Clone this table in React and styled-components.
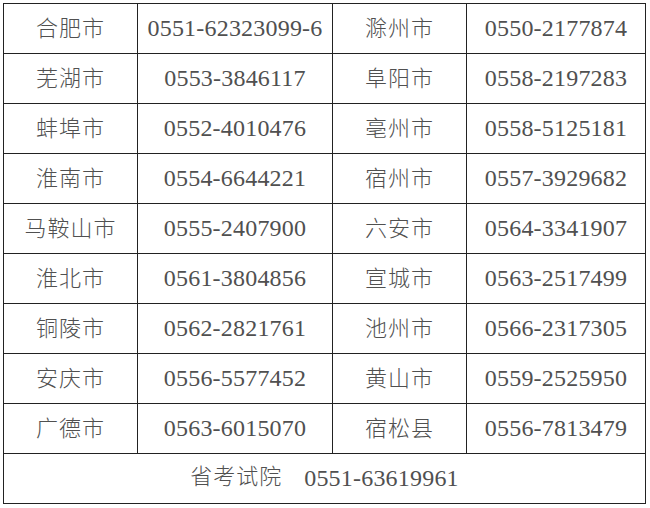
import React from 'react';
import styled, { createGlobalStyle } from 'styled-components';

const GlobalStyle = createGlobalStyle`
  html, body {
    margin: 0;
    padding: 0;
    background: #fff;
  }
`;

const Page = styled.div`
  padding: 3px 0 0 3px;
`;

const Table = styled.table`
  width: 642px;
  border-collapse: collapse;
  table-layout: fixed;
  border: 1.5px solid #222;
`;

const Row = styled.tr`
  height: 50px;
`;

const Cell = styled.td`
  border: 1.5px solid #222;
  padding: ${(p) => (p.$num ? '0 0 1px' : '0 0 5px')};
  text-align: center;
  vertical-align: middle;
  color: #505050;
  font-family: ${(p) =>
    p.$num
      ? '"Liberation Serif", "DejaVu Serif", serif'
      : '"Noto Sans CJK SC", "Noto Sans", sans-serif'};
  font-size: ${(p) => (p.$num ? '24px' : '22px')};
  font-weight: ${(p) => (p.$num ? 400 : 300)};
  line-height: 1;
  letter-spacing: ${(p) => (p.$num ? '0.2px' : '1px')};
  white-space: nowrap;
`;

const Footer = styled.td`
  border: 1.5px solid #222;
  padding: 0 0 2px;
  text-align: center;
  color: #505050;
  white-space: nowrap;
  line-height: 1;
`;

const FooterName = styled.span`
  font-family: "Noto Sans CJK SC", sans-serif;
  font-size: 22px;
  font-weight: 300;
  letter-spacing: 1px;
  margin-right: 22px;
  position: relative;
  top: -2px;
`;

const FooterNum = styled.span`
  font-family: "Liberation Serif", serif;
  font-size: 24px;
  letter-spacing: 0.2px;
`;

const rows = [
  ['合肥市', '0551-62323099-6', '滁州市', '0550-2177874'],
  ['芜湖市', '0553-3846117', '阜阳市', '0558-2197283'],
  ['蚌埠市', '0552-4010476', '亳州市', '0558-5125181'],
  ['淮南市', '0554-6644221', '宿州市', '0557-3929682'],
  ['马鞍山市', '0555-2407900', '六安市', '0564-3341907'],
  ['淮北市', '0561-3804856', '宣城市', '0563-2517499'],
  ['铜陵市', '0562-2821761', '池州市', '0566-2317305'],
  ['安庆市', '0556-5577452', '黄山市', '0559-2525950'],
  ['广德市', '0563-6015070', '宿松县', '0556-7813479'],
];

export default function App() {
  return (
    <Page>
      <GlobalStyle />
      <Table>
        <colgroup>
          <col style={{ width: 134 }} />
          <col style={{ width: 195 }} />
          <col style={{ width: 134 }} />
          <col style={{ width: 179 }} />
        </colgroup>
        <tbody>
          {rows.map((r) => (
            <Row key={r[0]}>
              <Cell>{r[0]}</Cell>
              <Cell $num>{r[1]}</Cell>
              <Cell>{r[2]}</Cell>
              <Cell $num>{r[3]}</Cell>
            </Row>
          ))}
          <Row>
            <Footer colSpan={4}>
              <FooterName>省考试院</FooterName>
              <FooterNum>0551-63619961</FooterNum>
            </Footer>
          </Row>
        </tbody>
      </Table>
    </Page>
  );
}
